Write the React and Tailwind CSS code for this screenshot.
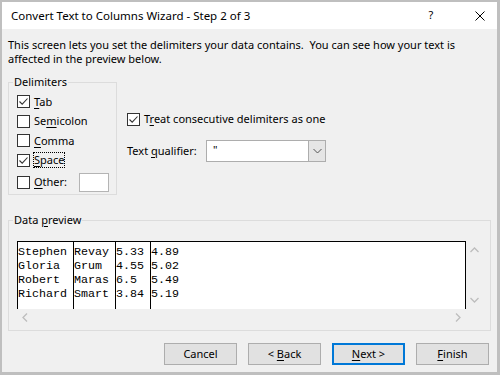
import React from "react";

const font = { fontFamily: '"Noto Sans", "Segoe UI", Arial, sans-serif' };

function Box({ checked }) {
  return (
    <span className="w-[13px] h-[13px] border border-[#333333] bg-white flex items-center justify-center shrink-0">
      {checked && (
        <svg width="11" height="11" viewBox="0 0 11 11">
          <path d="M1.5 5.5 L4.2 8.2 L9.5 2.5" fill="none" stroke="#333" strokeWidth="1.1" />
        </svg>
      )}
    </span>
  );
}

function U({ children }) {
  return <span className="underline underline-offset-[2px]">{children}</span>;
}

function Row({ checked, children, className = "" }) {
  return (
    <div className={"flex items-center gap-[4px] " + className}>
      <Box checked={checked} />
      {children}
    </div>
  );
}

const rows = [
  ["Stephen", "Revay", "5.33", "4.89"],
  ["Gloria", "Grum", "4.55", "5.02"],
  ["Robert", "Maras", "6.5", "5.49"],
  ["Richard", "Smart", "3.84", "5.19"],
];

function Col({ idx, className }) {
  return (
    <div className={"border-l border-black h-full pt-[3px] " + className}>
      {rows.map((r, i) => (
        <div key={i} className="h-[14px] leading-[14px] whitespace-pre">{r[idx]}</div>
      ))}
    </div>
  );
}

function Btn({ children, primary }) {
  return (
    <div
      className={
        "w-[73px] h-[22px] flex items-center justify-center bg-[#e1e1e1] whitespace-pre " +
        (primary ? "border-2 border-[#0078d7]" : "border border-[#adadad]")
      }
    >
      <span>{children}</span>
    </div>
  );
}

export default function App() {
  return (
    <div
      className="w-[500px] h-[375px] flex flex-col border-t-2 border-l-2 border-r-3 border-b-3 border-[#bfbfbf] text-black text-[11px] overflow-hidden"
      style={font}
    >
      <div className="h-[27px] bg-white flex items-center shrink-0">
        <div className="pl-[9px] flex-1 text-[11.5px]">Convert Text to Columns Wizard - Step 2 of 3</div>
        <div className="w-[20px] text-center mr-[34px]">?</div>
        <div className="mr-[12px]">
          <svg width="10" height="10" viewBox="0 0 10 10">
            <path d="M0.5 0.5 L9.5 9.5 M9.5 0.5 L0.5 9.5" stroke="#000" strokeWidth="1" />
          </svg>
        </div>
      </div>
      <div className="flex-1 bg-[#f0f0f0] px-[6px] flex flex-col">
        <p className="mt-[9px] leading-[14px] whitespace-pre">
          {"This screen lets you set the delimiters your data contains.  You can see how your text is\naffected in the preview below."}
        </p>
        <div className="flex mt-[9px]">
          <fieldset className="w-[109px] h-[120px] min-w-0 border border-[#dcdcdc] p-0 m-0">
            <legend className="ml-[4px] px-[1px] leading-[14px]">Delimiters</legend>
            <div className="pt-[3px] pl-[8px] flex flex-col">
              <Row checked className="h-[19.5px]">
                <span>
                  <U>T</U>ab
                </span>
              </Row>
              <Row className="h-[19.5px]">
                <span>
                  Se<U>m</U>icolon
                </span>
              </Row>
              <Row className="h-[19.5px]">
                <span>
                  <U>C</U>omma
                </span>
              </Row>
              <Row checked className="h-[19.5px]">
                <span className="outline-1 outline-dotted outline-black leading-[14px]">
                  <U>S</U>pace
                </span>
              </Row>
              <Row className="h-[20px] mt-[2px]">
                <span className="w-[45px]">
                  <U>O</U>ther:
                </span>
                <span className="w-[30px] h-[19px] border border-[#b4b4b4] bg-white -ml-[4px]" />
              </Row>
            </div>
          </fieldset>
          <div className="ml-[10px] flex flex-col pt-[38px]">
            <Row checked className="h-[13px]">
              <span>
                T<U>r</U>eat consecutive delimiters as one
              </span>
            </Row>
            <div className="flex items-center mt-[14px]">
              <span className="w-[79px]">
                Text <U>q</U>ualifier:
              </span>
              <div className="w-[120px] h-[22px] border border-[#adadad] bg-white flex">
                <div className="flex-1 pl-[6px] leading-[18px]">"</div>
                <div className="w-[17px] h-full bg-[#e5e5e5] border-l border-[#adadad] flex items-center justify-center">
                  <svg width="9" height="6" viewBox="0 0 9 6">
                    <path d="M0.5 1 L4.5 5 L8.5 1" fill="none" stroke="#555" strokeWidth="1" />
                  </svg>
                </div>
              </div>
            </div>
          </div>
        </div>
        <fieldset className="mt-[18px] w-[483px] min-w-0 border border-[#dcdcdc] p-0 pb-[5px] m-0">
          <legend className="ml-[4px] px-[1px] leading-[14px]">
            Data <U>p</U>review
          </legend>
          <div className="mt-[14px] pl-[8px] flex flex-col">
            <div className="flex h-[68px]">
              <div
                className="w-[449px] h-full bg-white border-t border-r border-black flex text-[11.67px]"
                style={{ fontFamily: '"Liberation Mono", "Courier New", monospace' }}
              >
                <Col idx={0} className="w-[56px]" />
                <Col idx={1} className="w-[42px]" />
                <Col idx={2} className="w-[35px]" />
                <Col idx={3} className="flex-1" />
              </div>
              <div className="w-[16px] flex flex-col items-center justify-between py-[6px]">
                <svg width="9" height="6" viewBox="0 0 9 6">
                  <path d="M0.5 5 L4.5 1 L8.5 5" fill="none" stroke="#bdbdbd" strokeWidth="1.3" />
                </svg>
                <svg width="9" height="6" viewBox="0 0 9 6">
                  <path d="M0.5 1 L4.5 5 L8.5 1" fill="none" stroke="#bdbdbd" strokeWidth="1.3" />
                </svg>
              </div>
            </div>
            <div className="h-[16px] w-[465px] flex items-center justify-between pl-[5px] pr-[21px]">
              <svg width="6" height="9" viewBox="0 0 6 9">
                <path d="M5 0.5 L1 4.5 L5 8.5" fill="none" stroke="#bdbdbd" strokeWidth="1.3" />
              </svg>
              <svg width="6" height="9" viewBox="0 0 6 9">
                <path d="M1 0.5 L5 4.5 L1 8.5" fill="none" stroke="#bdbdbd" strokeWidth="1.3" />
              </svg>
            </div>
          </div>
        </fieldset>
        <div className="flex justify-end gap-[11px] mt-[12px] pr-[2px]">
          <Btn>Cancel</Btn>
          <Btn>
            {"< "}
            <U>B</U>ack
          </Btn>
          <Btn primary>
            <U>N</U>
            {"ext >"}
          </Btn>
          <Btn>
            <U>F</U>inish
          </Btn>
        </div>
      </div>
    </div>
  );
}
